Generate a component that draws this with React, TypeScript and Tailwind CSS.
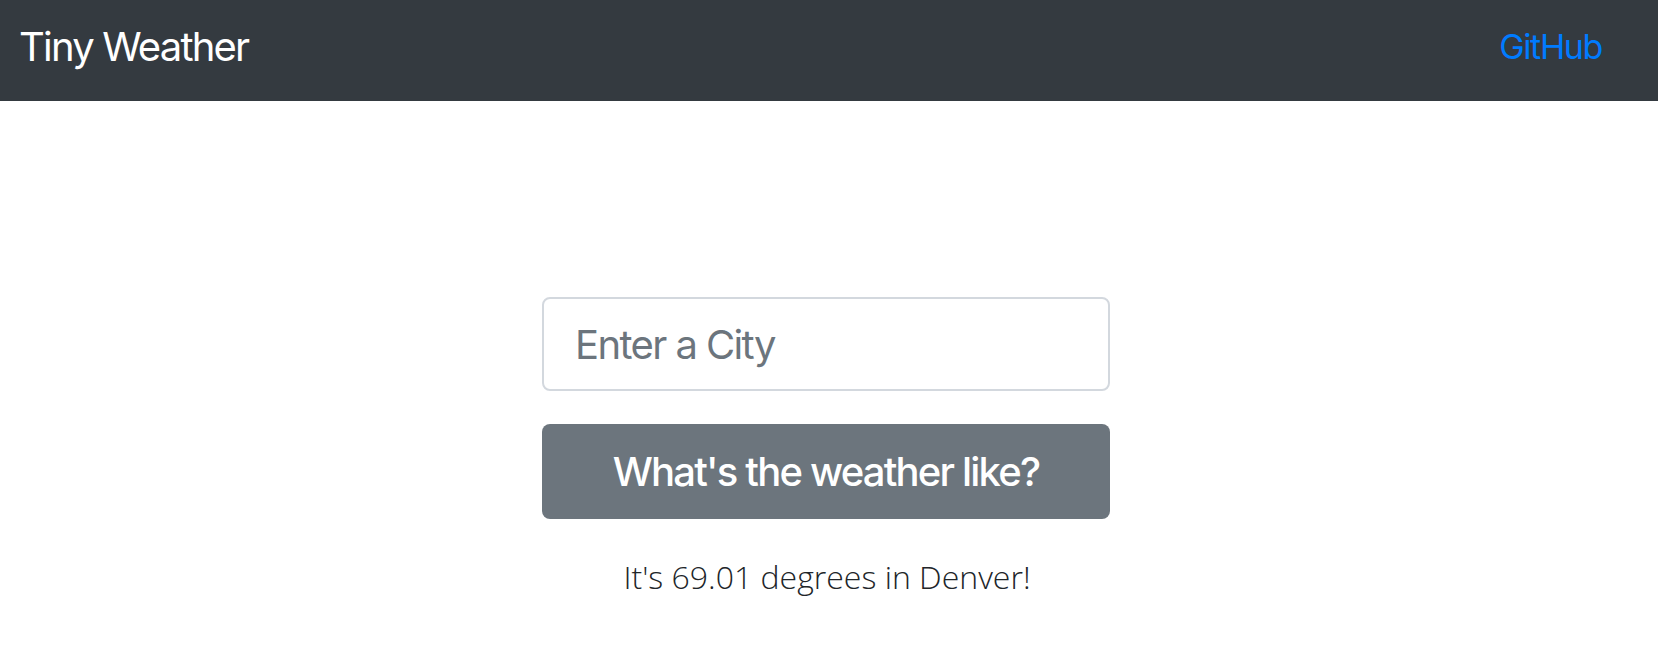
export default function App() {
  return (
    <div className="min-h-[654px] bg-white font-['Inter',sans-serif]">
      <nav className="flex h-[101px] items-center justify-between bg-[#343a40] pb-[8px] pl-[19px] pr-[56px]">
        <span className="text-[40px] leading-none tracking-[-0.045em] text-white">Tiny Weather</span>
        <a href="#" className="text-[34px] leading-none tracking-[-0.04em] text-[#007bff]">
          GitHub
        </a>
      </nav>
      <main className="flex flex-col pt-[196px]">
        <div className="ml-[542px] flex w-[568px] flex-col gap-[33px]">
          <input
            type="text"
            placeholder="Enter a City"
            className="h-[94px] w-full rounded-[8px] border-2 border-[#d3d8de] px-[31px] text-[40px] tracking-[-0.04em] text-[#495057] outline-none placeholder:text-[#6c757d]"
          />
          <button className="h-[95px] w-full rounded-[8px] bg-[#6c757d] text-[40px] font-medium tracking-[-0.045em] text-white">
            What's the weather like?
          </button>
        </div>
        <p className="mt-[34px] pr-[4px] text-center font-['Open_Sans',sans-serif] text-[32px] leading-[48px] font-light text-[#212529]">
          It's 69.01 degrees in Denver!
        </p>
      </main>
    </div>
  );
}
